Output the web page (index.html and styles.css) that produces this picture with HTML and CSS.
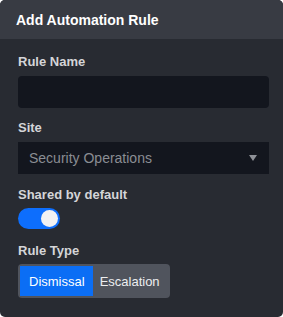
FILE: index.html
```html
<!DOCTYPE html>
<html lang="en">
<head>
    <meta charset="UTF-8">
    <meta name="viewport" content="width=device-width, initial-scale=1.0">
    <title>Add Automation Rule</title>
    <link rel="stylesheet" href="styles.css">
</head>
<body>
    <div class="panel">
        <div class="panel-header">Add Automation Rule</div>
        <form class="panel-body">
            <label class="field-label" for="ruleName">Rule Name</label>
            <input class="text-input" type="text" id="ruleName">

            <label class="field-label" for="site">Site</label>
            <div class="select-box" id="site">
                <span>Security Operations</span>
                <span class="caret"></span>
            </div>

            <label class="field-label">Shared by default</label>
            <div class="toggle on"><span class="knob"></span></div>

            <label class="field-label">Rule Type</label>
            <div class="segmented">
                <button type="button" class="seg active">Dismissal</button>
                <button type="button" class="seg">Escalation</button>
            </div>
        </form>
    </div>
</body>
</html>
```

FILE: styles.css
```css
body {
    margin: 0;
    background: #ffffff;
    font-family: "Liberation Sans", Arial, sans-serif;
}
.panel {
    width: 283px;
    height: 317px;
    background: #282b32;
    border-radius: 5px;
    overflow: hidden;
}
.panel-header {
    height: 39px;
    display: flex;
    align-items: center;
    padding-left: 16px;
    background: #383b43;
    color: #ffffff;
    font-size: 14px;
    font-weight: bold;
}
.panel-body {
    display: flex;
    flex-direction: column;
    align-items: flex-start;
    padding: 15px 14px 0 18px;
}
.field-label {
    font-size: 13px;
    font-weight: bold;
    line-height: 16px;
    color: #d4d5d8;
    margin-bottom: 6px;
}
.text-input {
    box-sizing: border-box;
    width: 251px;
    height: 32px;
    margin: 0 0 12px;
    border: none;
    border-radius: 4px;
    background: #13161e;
    outline: none;
}
.select-box {
    box-sizing: border-box;
    width: 251px;
    height: 32px;
    margin-bottom: 13px;
    padding: 0 11px;
    display: flex;
    align-items: center;
    justify-content: space-between;
    background: #13161e;
    color: #8a8d93;
    font-size: 14px;
}
.caret {
    width: 0;
    height: 0;
    border-left: 4px solid transparent;
    border-right: 4px solid transparent;
    border-top: 6px solid #8e9197;
    margin-right: 1px;
}
.toggle {
    box-sizing: border-box;
    width: 42px;
    height: 21px;
    margin: -1px 0 14px;
    padding: 2px;
    border-radius: 11px;
    background: #0d6efd;
    display: flex;
    justify-content: flex-end;
}
.knob {
    width: 17px;
    height: 17px;
    border-radius: 50%;
    background: #f1f1f3;
}
.segmented {
    display: flex;
    padding: 2px;
    margin-top: -1px;
    border-radius: 4px;
    background: #50545d;
}
.seg {
    height: 30px;
    padding: 0 8px 0 7px;
    border: none;
    border-radius: 0;
    background: transparent;
    color: #eceef0;
    font-family: "Liberation Sans", Arial, sans-serif;
    font-size: 13px;
}
.seg.active {
    padding: 0 8px 0 9px;
    background: #0b6ef5;
    color: #ffffff;
}
```
